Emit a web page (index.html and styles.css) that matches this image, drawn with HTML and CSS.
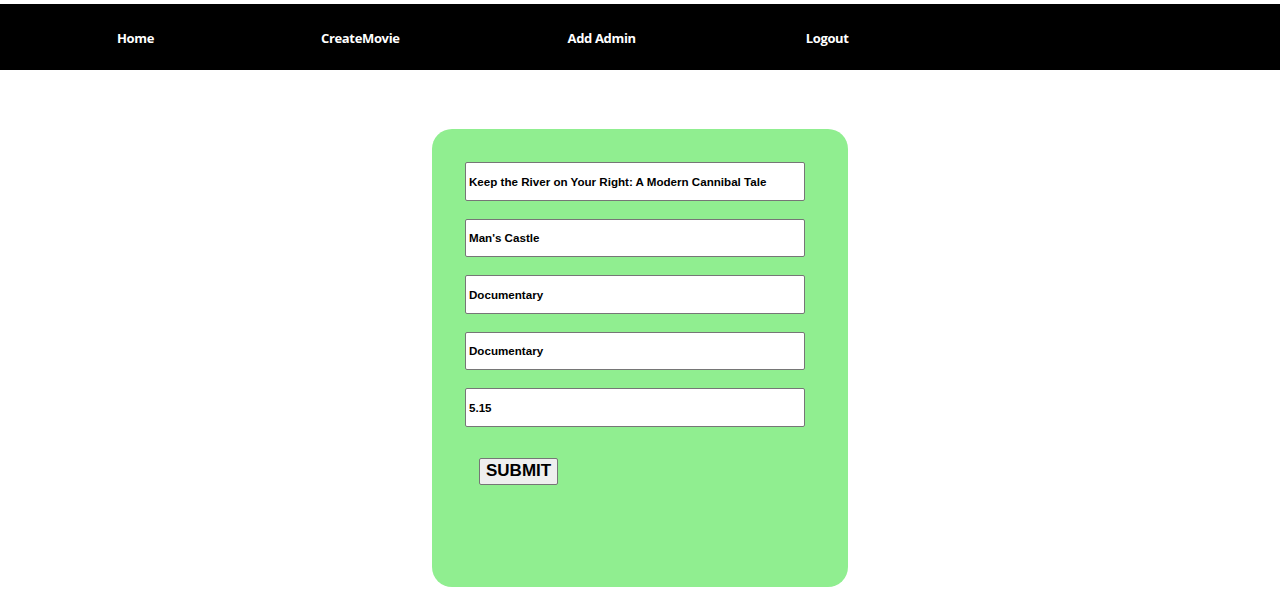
FILE: index.html
```html
<!DOCTYPE html>
<html>
<head>
<meta charset="utf-8">
<link rel="stylesheet" href="styles.css">
</head>
<body>
<nav class="nav">
  <a class="nav-link home" href="#">Home</a>
  <a class="nav-link create" href="#">CreateMovie</a>
  <a class="nav-link admin" href="#">Add Admin</a>
  <a class="nav-link logout" href="#">Logout</a>
</nav>
<main class="main">
  <form class="card">
    <input class="field" type="text" value="Keep the River on Your Right: A Modern Cannibal Tale">
    <input class="field" type="text" value="Man's Castle">
    <input class="field" type="text" value="Documentary">
    <input class="field" type="text" value="Documentary">
    <input class="field" type="text" value="5.15">
    <div class="actions"><button class="submit" type="button">SUBMIT</button></div>
  </form>
</main>
</body>
</html>
```

FILE: styles.css
```css
html, body {
  margin: 0;
  padding: 0;
  background: #ffffff;
}
body {
  padding-top: 4px;
  font-family: "Liberation Sans", Arial, sans-serif;
}
.nav {
  height: 66px;
  box-sizing: border-box;
  padding-top: 2px;
  background: #000000;
  display: flex;
  align-items: center;
}
.nav-link {
  color: #ffffff;
  text-decoration: none;
  font-family: "Open Sans", "Noto Sans", sans-serif;
  font-weight: 700;
  font-size: 13px;
  letter-spacing: -0.35px;
}
.home { margin-left: 117px; }
.create { margin-left: 167px; }
.admin { margin-left: 168px; }
.logout { margin-left: 170px; }
.main {
  display: flex;
  justify-content: center;
  padding-top: 59px;
}
.card {
  width: 416px;
  height: 458px;
  box-sizing: border-box;
  background: #90ee90;
  border-radius: 20px;
  padding: 33px 0 0 33px;
  display: flex;
  flex-direction: column;
  gap: 18px;
}
.field {
  width: 340px;
  height: 38.5px;
  box-sizing: border-box;
  border: 1px solid #767676;
  border-radius: 2px;
  padding: 0 3px;
  font-family: "Liberation Sans", Arial, sans-serif;
  font-weight: 700;
  font-size: 11.6px;
  color: #000000;
  background: #ffffff;
}
.actions {
  padding: 13px 0 0 14px;
}
.submit {
  height: 27px;
  padding: 0 6px;
  font-family: "Liberation Sans", Arial, sans-serif;
  font-weight: 700;
  font-size: 17px;
  color: #000000;
  background: #efefef;
  border: 1px solid #767676;
  border-radius: 2px;
}
```
